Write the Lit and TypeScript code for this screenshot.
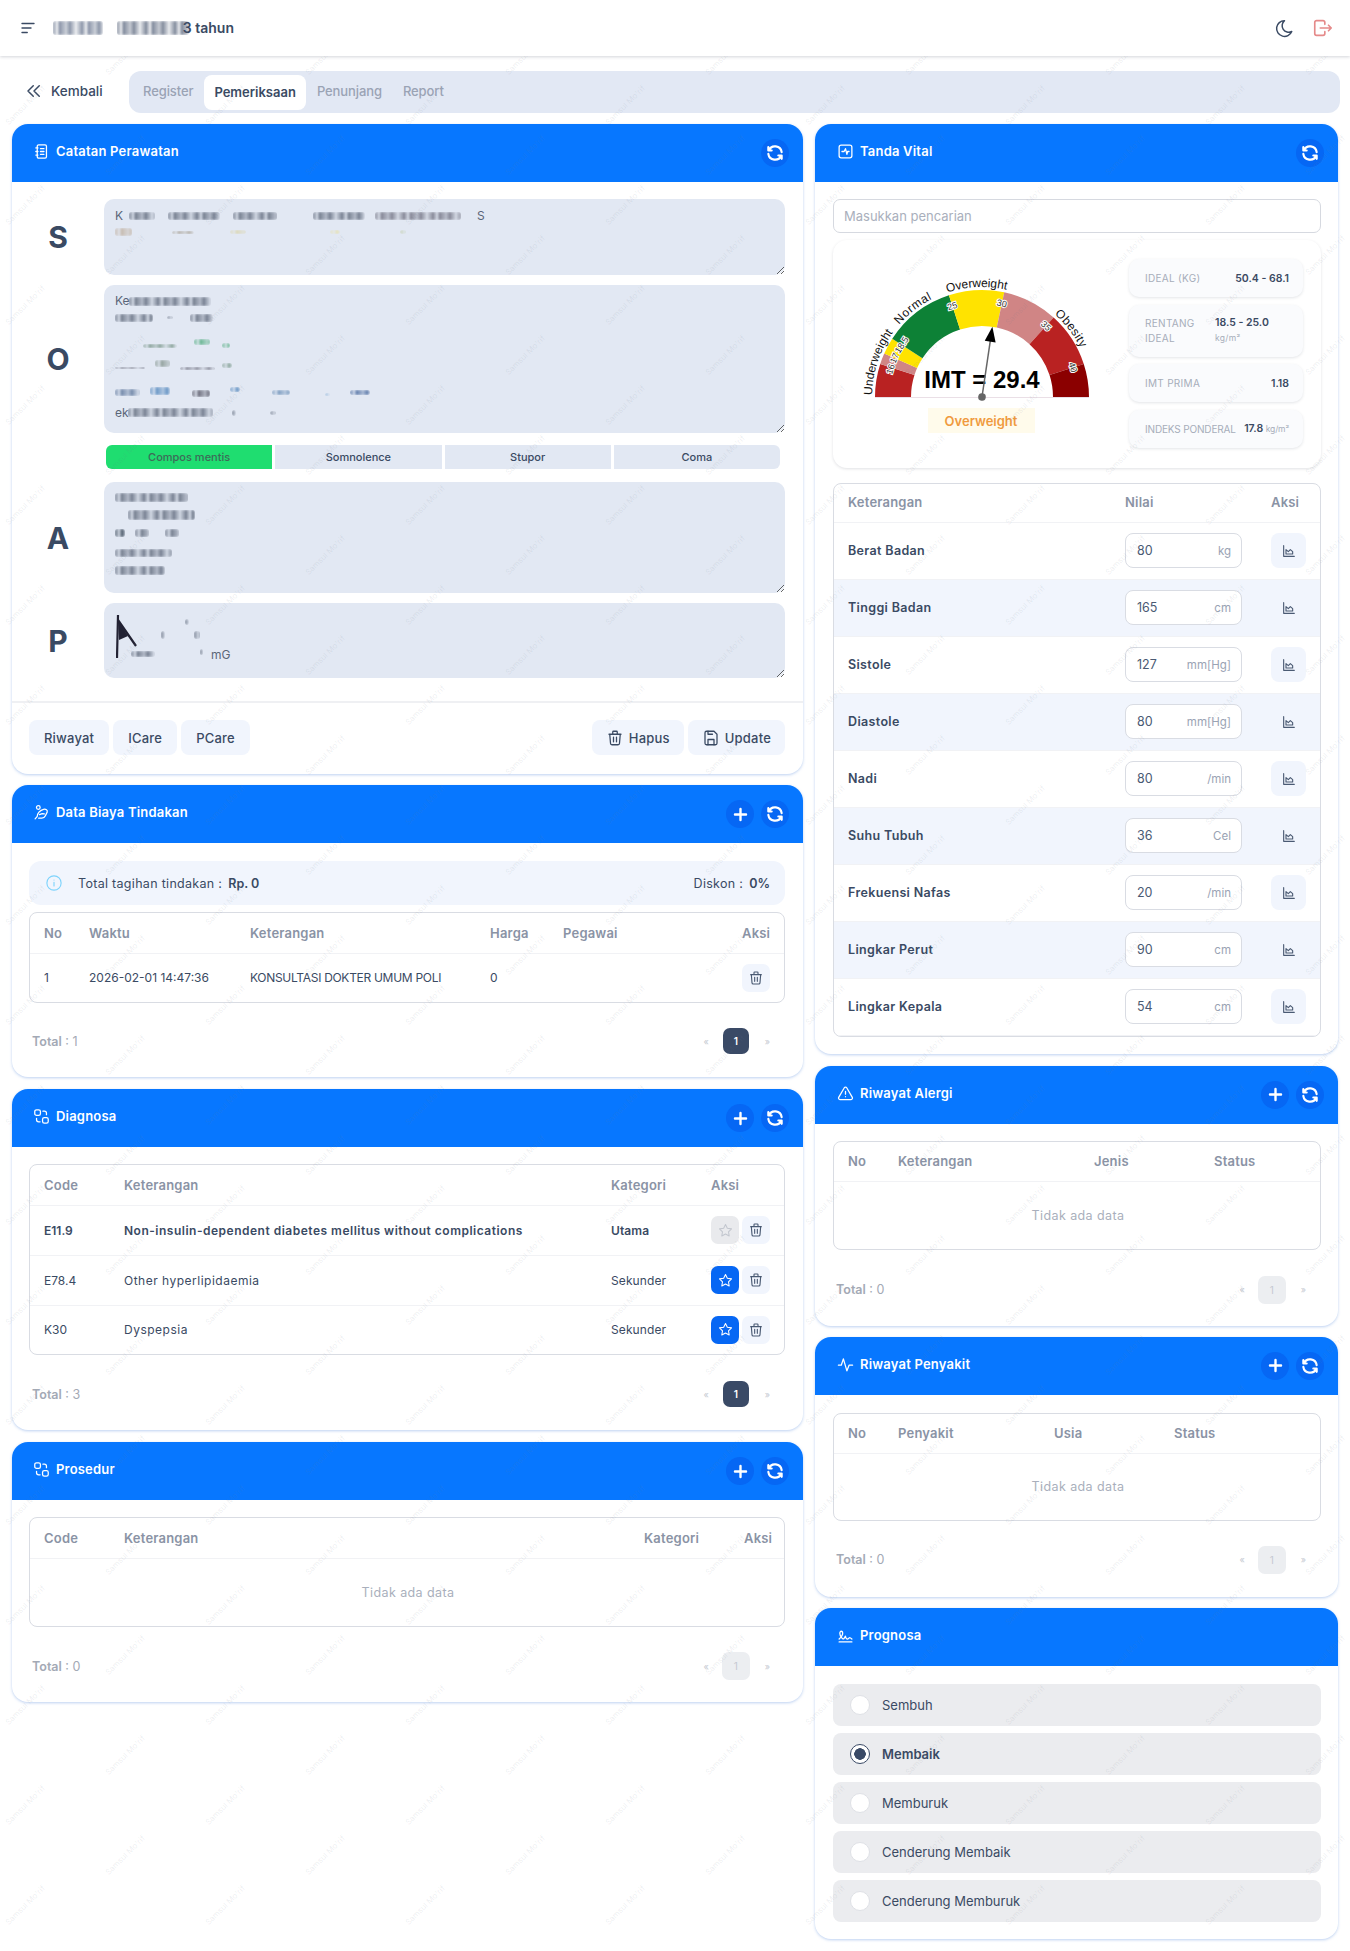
import { LitElement, html, css, svg } from "lit";
import { customElement } from "lit/decorators.js";

const ic = (body: unknown, size = 18, sw = 1.8) => html`<svg class="ic" width=${size} height=${size} viewBox="0 0 24 24" fill="none" stroke="currentColor" stroke-width=${sw} stroke-linecap="round" stroke-linejoin="round">${body}</svg>`;

const I = {
  menu: svg`<path d="M4 6h16M4 12h12M4 18h7"/>`,
  moon: svg`<path d="M12 3a7.5 7.5 0 0 0 8.3 12.4A9 9 0 1 1 12 3z"/>`,
  logout: svg`<path d="M14 8V6a2 2 0 0 0-2-2H5a2 2 0 0 0-2 2v12a2 2 0 0 0 2 2h7a2 2 0 0 0 2-2v-2"/><path d="M9 12h12l-3-3m0 6l3-3"/>`,
  back: svg`<path d="M11 5l-7 7 7 7M19 5l-7 7 7 7"/>`,
  refresh: svg`<path d="M20 11A8.1 8.1 0 0 0 4.5 9M4 5v4h4"/><path d="M4 13a8.1 8.1 0 0 0 15.5 2m.5 4v-4h-4"/>`,
  plus: svg`<path d="M12 5v14M5 12h14"/>`,
  notebook: svg`<rect x="6" y="2.5" width="13" height="19" rx="2"/><path d="M4 7h3M4 12h3M4 17h3M10.5 8h5M10.5 12h5M10.5 16h5"/>`,
  vital: svg`<rect x="3" y="3" width="18" height="18" rx="3"/><path d="M7 12h3l2-4 2 8 1-4h2"/>`,
  hand: svg`<circle cx="7.5" cy="5" r="2.6"/><path d="M3 21l3-3.5c-.5-4 4-9 9-10 3-.6 6 1 5 4l-2.500 5c-1 2-3 3.500-5 3.500H8"/><path d="M9 15l4-1.500 3 .5"/>`,
  transform: svg`<rect x="2.500" y="2.500" width="8" height="8" rx="2.500"/><rect x="13.500" y="13.500" width="8" height="8" rx="2.500"/><path d="M14 4.500h2a3 3 0 0 1 3 3v2M10 19.500H8a3 3 0 0 1-3-3v-2"/>`,
  alert: svg`<path d="M12 9v4M12 16.500v.01M10.300 3.900L2.400 17.500A2 2 0 0 0 4.100 20.500h15.800a2 2 0 0 0 1.700-3L13.700 3.900a2 2 0 0 0-3.400 0z"/>`,
  pulse: svg`<path d="M2 13h4l3-9 5 17 3-8h5"/>`,
  sign: svg`<path d="M3 17c3.300-3.300 5-6 5-8 0-3-1-3-2-3s-2 1.100-2 3c0 2 1.700 4.900 2.500 6 1.500 2 2.500 2.500 3.500 1l2-3c.3 2.700 1.300 4 3 4 .5 0 2.600-2 3-2 .5 0 1.500.7 3 2"/><path d="M3 21h18"/>`,
  trash: svg`<path d="M4 7h16M10 11v6M14 11v6M5 7l1 12a2 2 0 0 0 2 2h8a2 2 0 0 0 2-2l1-12M9 7V4a1 1 0 0 1 1-1h4a1 1 0 0 1 1 1v3"/>`,
  save: svg`<path d="M6 3h10l4 4v12a2 2 0 0 1-2 2H6a2 2 0 0 1-2-2V5a2 2 0 0 1 2-2z"/><path d="M8 21v-7h8v7M8 3v4h6"/>`,
  star: svg`<path d="M12 3.500l2.600 5.400 5.900.8-4.300 4.100 1 5.900L12 16.900l-5.200 2.800 1-5.900L3.500 9.700l5.900-.8z"/>`,
  chart: svg`<path d="M4 4v16h16"/><path d="M7.500 16.500V10l3.500 3 3-3 3.500 3v3.500z"/>`,
  info: svg`<circle cx="12" cy="12" r="9.500"/><path d="M12 11v5M12 8v.01"/>`,
};

/* The reference hides the notes behind a privacy blur. They are reproduced as smudges, not invented text. */
type Sm = [number, number, number, number, string?, number?];
const C = "#3f4a5e";
const smS: Sm[] = [[14,13,26,8],[53,13,52,8],[118,13,44,8],[198,13,52,8],[260,13,86,8,"#556"],[0,29,17,8,"#b9a58f"],[57,32,22,3,"#998f7c"],[115,31,16,4,"#d8cf9a"],[215,31,10,4,"#e8dfa0"],[285,31,6,4,"#b5c38e"]];
const smO: Sm[] = [[14,12,82,9],[0,29,38,8],[52,31,6,3],[75,29,23,8],[28,59,34,4,"#5b7f6b"],[79,54,16,6,"#2f9e63"],[107,58,8,5,"#2f9e63"],[0,82,30,2,"#556"],[40,75,15,7,"#6c7f74"],[65,82,35,3,"#556"],[107,78,10,5,"#678a78"],[0,104,25,7,"#3c5a86"],[35,102,20,8,"#2f6fb0"],[77,105,18,7,"#334"],[115,102,10,5,"#2f6fb0"],[157,105,18,5,"#4c78a8"],[210,108,5,3,"#6ea0d0"],[235,105,20,5,"#234a8a"],[13,123,85,9],[117,125,4,6],[155,126,6,4]];
const smA: Sm[] = [[0,11,73,9],[13,28,67,10],[0,47,10,8,"#123"],[20,47,14,8],[50,47,14,8],[0,67,57,8],[0,84,50,9]];
const smP: Sm[] = [[46,28,4,8],[70,16,4,6],[79,28,6,8],[85,46,3,6],[16,48,24,6]];
const smT: Sm[] = [[0,3,50,14,"#4e5d7a"],[64,3,72,14,"#3f4d68"]];

const bg = (s: Sm) => `left:${s[0]}px;top:${s[1]}px;width:${s[2]}px;height:${s[3]}px;background:${s[4] ?? C}`;

const GC = { x: 149, y: 157, R: 107, r: 71 };
const pt = (rad: number, deg: number) => {
  const a = (deg * Math.PI) / 180;
  return [GC.x - rad * Math.cos(a), GC.y - rad * Math.sin(a)].map((v) => +v.toFixed(2));
};
const seg = (a: number, b: number) => {
  const [x1, y1] = pt(GC.R, a), [x2, y2] = pt(GC.R, b), [x3, y3] = pt(GC.r, b), [x4, y4] = pt(GC.r, a);
  return `M${x1} ${y1}A${GC.R} ${GC.R} 0 0 1 ${x2} ${y2}L${x3} ${y3}A${GC.r} ${GC.r} 0 0 0 ${x4} ${y4}Z`;
};
const segs: [number, number, string][] = [[0,18,"#b92222"],[18,24,"#d08585"],[24,33,"#ffe300"],[33,72,"#0d8136"],[72,102,"#ffe300"],[102,132,"#d08585"],[132,162,"#b92222"],[162,180,"#8b0000"]];
const ticks: [string, number][] = [["16",17],["17",24],["18.5",33],["25",72],["30",102],["35",132],["40",162]];
const names: [string, number, number][] = [["Underweight",1,67],["Normal",41,42],["Overweight",71.500,60],["Obesity",131,43]];

const vitals = [["Berat Badan","80","kg"],["Tinggi Badan","165","cm"],["Sistole","127","mm[Hg]"],["Diastole","80","mm[Hg]"],["Nadi","80","/min"],["Suhu Tubuh","36","Cel"],["Frekuensi Nafas","20","/min"],["Lingkar Perut","90","cm"],["Lingkar Kepala","54","cm"]];

@customElement("app-root")
export class AppRoot extends LitElement {
  static styles = css`
    :host { display: block; position: relative; height: 1951px; overflow: hidden; background: #fff; color: #3a4a63; font-family: Inter, "Open Sans", sans-serif; font-size: 12.5px; }
    * { box-sizing: border-box; }
    .ic { display: block; flex: none; }
    .top { position: relative; z-index: 2; height: 56px; display: flex; align-items: center; padding: 0 16px 0 19px; box-shadow: 0 1px 3px rgba(60,70,90,.22); background: #fff; }
    .title { position: relative; margin-left: 16px; width: 181px; height: 20px; text-align: right; font-size: 14px; font-weight: 600; line-height: 20px; }
    .title .sms { left: 0; }
    .spacer { flex: 1; }
    .moon { margin-right: 17px; }
    .logout { color: #e58a8a; }
    .nav { display: flex; align-items: center; margin: 15px 10px 11px 0; height: 42px; }
    .back { width: 129px; padding-left: 25px; display: flex; align-items: center; gap: 8px; font-weight: 500; font-size: 13.500px; padding-bottom: 2px; }
    .tabs { flex: 1; height: 42px; background: #e2e8f4; border-radius: 12px; display: flex; align-items: center; padding: 0 0 0 14px; gap: 21px; color: #9aa3b4; font-size: 13px; }
    .tabs b { font-weight: 500; letter-spacing: -.1px; padding-bottom: 2px; }
    .tabs .on { background: #fff; color: #3a4a63; border-radius: 8px; height: 35px; line-height: 34px; padding: 0 10px; margin: 0 -10px; letter-spacing: 0; font-weight: 600; }
    .cols { display: grid; grid-template-columns: 791px 523px; gap: 12px; padding-left: 12px; align-items: start; }
    .col { display: flex; flex-direction: column; }
    .g11 { margin-top: 11px; }
    .g12 { margin-top: 12px; }
    .card { background: #fff; border-radius: 16px; box-shadow: 0 1px 3px rgba(90,140,220,.4); }
    .ch { height: 58px; background: #0777ff; border-radius: 16px 16px 0 0; color: #fff; display: flex; align-items: center; padding: 0 14px 0 21px; font-weight: 600; font-size: 13px; gap: 7px; }
    .ch .lbl { flex: 1; margin: -4px 0 0 -1px; letter-spacing: .2px; }
    .ch > .ic { margin-top: -3px; }
    .right .ch { padding-left: 22px; }
    .rb { width: 28px; height: 28px; border-radius: 50%; background: #0667f4; display: grid; place-items: center; }
    .body { padding: 17px 18px 17px 17px; }
    .right .body { padding: 17px 17px 17px 18px; }
    .soap { display: grid; grid-template-columns: 74px 681px; row-gap: 10px; padding: 17px 18px 23px 18px; }
    .letter { font-size: 30px; font-weight: 700; display: grid; place-items: center; color: #3a4a63; transform: translateX(-9px); }
    .ta { position: relative; display: flex; }
    textarea { flex: 1; display: block; border: 0; background: #e2e8f3; border-radius: 10px; resize: vertical; outline: none; margin: 0; padding: 0; }
    .sms { position: absolute; left: 11px; top: 0; pointer-events: none; font-size: 12px; color: #5a6577; }
    .sm { position: absolute; filter: blur(.9px); opacity: .62; border-radius: 2px; -webkit-mask-image: repeating-linear-gradient(90deg, #000 0, rgba(0,0,0,.25) 4px, #000 7px, rgba(0,0,0,.5) 13px, #000 17px, rgba(0,0,0,.2) 23px, #000 29px); mask-image: repeating-linear-gradient(90deg, #000 0, rgba(0,0,0,.25) 4px, #000 7px, rgba(0,0,0,.5) 13px, #000 17px, rgba(0,0,0,.2) 23px, #000 29px); }
    .frag { position: absolute; white-space: nowrap; line-height: 14px; }
    .tri { position: absolute; left: 12px; top: 11px; filter: blur(.5px); pointer-events: none; }
    .segm { grid-column: 2; display: grid; grid-template-columns: repeat(4, 1fr); gap: 3px; margin: 2px 5px 3px 2px; height: 24px; }
    .segm div { background: #e2e8f3; font-size: 11px; font-weight: 500; display: grid; place-items: center; }
    .segm div:first-child { background: #1fdd70; border-radius: 6px 0 0 6px; color: #3d6b58; }
    .segm div:last-child { border-radius: 0 6px 6px 0; }
    .foot { border-top: 2px solid #eff0f3; padding: 17px 18px 19px 17px; display: flex; gap: 4px; }
    .btn { height: 35px; background: #f1f5fd; border-radius: 8px; display: flex; align-items: center; padding: 0 15px; font-weight: 500; font-size: 13px; gap: 6px; color: #3a4a63; letter-spacing: .2px; }
    .btn.i { padding: 0 14px; gap: 5px; }
    .info { height: 44px; border-radius: 12px; background: #f1f5fd; display: flex; align-items: center; padding: 0 15px 0 16px; margin: 1px 0 7px; font-size: 12.5px; letter-spacing: .3px; }
    .info .ic { color: #7dd3fc; margin-right: 15px; }
    .info b { font-weight: 600; margin-left: 6px; letter-spacing: 0; }
    .wrap { border: 1px solid #d9dce3; border-radius: 8px; overflow: hidden; }
    table { width: 100%; border-collapse: collapse; table-layout: fixed; }
    th { height: 40px; text-align: left; padding: 0 14px; color: #8a93a5; font-weight: 600; font-size: 13px; letter-spacing: .2px; border-bottom: 1px solid #f1f2f5; white-space: nowrap; }
    td { padding: 0 14px; font-size: 12px; white-space: nowrap; }
    td.w { letter-spacing: .5px; }
    td.k { letter-spacing: .1px; }
    td.u { letter-spacing: -.3px; }
    .bordered td { border-bottom: 1px solid #f1f2f5; }
    .bordered tr:last-child td { border-bottom: 0; }
    .strong td { font-weight: 600; }
    .empty { text-align: center; color: #a9afbc; font-size: 12.500px; letter-spacing: .4px; }
    .act { display: flex; gap: 3px; }
    .sq { width: 28px; height: 28px; background: #f1f5fd; border-radius: 7px; display: grid; place-items: center; color: #4a5a73; }
    .sq.blue { background: #0667f4; color: #fff; }
    .sq.off { background: #e9eaed; color: #c3c7cf; }
    .pager { display: flex; align-items: center; justify-content: space-between; padding: 0 15px 0 3px; margin-top: 8px; height: 28px; font-size: 12.500px; color: #a3a9b5; }
    .pager b { font-weight: 600; }
    .pg { display: flex; align-items: center; gap: 13px; font-size: 9px; color: #c5c9d1; }
    .pg span.n { width: 28px; height: 28px; display: grid; place-items: center; font-size: 10px; background: #eceef1; border-radius: 7px; color: #c5c9d1; margin-right: 2px; }
    .pg span.n.on { background: #3a4a66; color: #fff; width: 26px; height: 26px; font-weight: 600; margin: 0 3px 0 1px; }
    .body.tail { padding-bottom: 22px; }
    .body.tail23 { padding-bottom: 23px; padding-top: 18px; }
    .search { height: 34px; border: 1px solid #d6d9e0; border-radius: 7px; display: flex; align-items: center; padding-left: 10px; color: #a9afbc; font-size: 13px; }
    .imt { margin-top: 7px; height: 228px; border-radius: 14px; box-shadow: 0 1px 3px rgba(60,70,90,.16); display: flex; }
    .g { width: 296px; display: flex; flex-direction: column; align-items: center; }
    .g svg { display: block; }
    .badge { width: 107px; height: 25px; background: #fffbeb; color: #f09a3e; font-weight: 600; font-size: 13px; display: grid; place-items: center; }
    .stats { width: 174px; padding-top: 19px; display: flex; flex-direction: column; gap: 7.500px; }
    .st { height: 38px; background: #fafbfd; border-radius: 10px; box-shadow: 0 1px 3px rgba(60,70,90,.14); display: flex; align-items: center; justify-content: space-between; padding: 0 14px 0 16px; font-size: 10px; color: #a6adba; white-space: nowrap; letter-spacing: .3px; }
    .st.n { letter-spacing: -.15px; }
    .st b { color: #3a4a63; font-weight: 600; font-size: 10.500px; letter-spacing: 0; }
    .st small { font-size: 8.500px; color: #a6adba; }
    .st.tall { height: 52px; justify-content: flex-start; gap: 0; line-height: 15px; }
    .st.tall > div:first-child { width: 70px; }
    .vt { margin-top: 15px; }
    .vt th { height: 38px; padding-bottom: 2px; }
    .vt td { height: 57px; font-size: 12.500px; }
    .vt td.nm { font-weight: 600; letter-spacing: .35px; }
    .vt tr:nth-child(even) td { background: #f1f5fd; }
    .vt tbody td { border-bottom: 1px solid #f1f2f5; }
    .inp { width: 117px; height: 35px; background: #fff; border: 1px solid #d9dce3; border-radius: 8px; display: flex; justify-content: space-between; align-items: center; padding: 0 10px 0 11px; color: #4a5a73; }
    .inp span:last-child { color: #9aa3b4; font-size: 11.500px; }
    .ck { width: 35px; height: 35px; border-radius: 8px; background: #f1f5fd; display: grid; place-items: center; color: #4a5a73; }
    .opts { display: flex; flex-direction: column; gap: 7px; padding-top: 18px; }
    .opt { height: 42px; background: #ebecef; border-radius: 8px; display: flex; align-items: center; padding-left: 17px; gap: 12px; font-size: 13px; }
    .opt i { width: 20px; height: 20px; border-radius: 50%; background: #fff; border: 1px solid #dfe1e6; display: block; flex: none; }
    .opt.on { font-weight: 600; }
    .opt.on i { border: 1.500px solid #3a4a66; background: radial-gradient(circle, #3a4a66 0 5.500px, #fff 6px); }
    .wm { position: absolute; z-index: 1; inset: 0; pointer-events: none; overflow: hidden; }
    .wm span { position: absolute; transform: translate(-50%, -50%) rotate(-45deg); font-size: 8px; color: rgba(110,120,140,.13); white-space: nowrap; }
  `;

  private head(icon: unknown, title: string, plus = false, refresh = true) {
    return html`<div class="ch">${ic(icon, 17, 1.800)}<span class="lbl">${title}</span>
      ${plus ? html`<div class="rb">${ic(I.plus, 19, 3)}</div>` : ""}
      ${refresh ? html`<div class="rb">${ic(I.refresh, 20, 2.600)}</div>` : ""}</div>`;
  }

  private smudge(list: Sm[], frags: [string, number, number][] = []) {
    return html`<div class="sms">${list.map((s) => html`<div class="sm" style=${bg(s)}></div>`)}${frags.map(
      (f) => html`<span class="frag" style="left:${f[1]}px;top:${f[2]}px">${f[0]}</span>`
    )}</div>`;
  }

  private ta(letter: string, h: number, list: Sm[], frags: [string, number, number][] = [], extra: unknown = "") {
    return html`<div class="letter">${letter}</div>
      <div class="ta" style="height:${h}px"><textarea readonly aria-label=${letter}></textarea>${this.smudge(list, frags)}${extra}</div>`;
  }

  private table(cols: number[], heads: string[], rows: unknown) {
    return html`<div class="wrap"><table class="bordered"><colgroup>${cols.map((c) => html`<col style="width:${c}px" />`)}</colgroup>
      <thead><tr>${heads.map((h) => html`<th>${h}</th>`)}</tr></thead><tbody>${rows}</tbody></table></div>`;
  }

  private pager(total: number, active: boolean) {
    return html`<div class="pager"><span><b>Total</b> : ${total}</span>
      <div class="pg"><span>«</span><span class="n ${active ? "on" : ""}">1</span><span>»</span></div></div>`;
  }

  private emptyRow(n: number, h: number) {
    return html`<tr><td class="empty" colspan=${n} style="height:${h}px">Tidak ada data</td></tr>`;
  }

  private del() { return html`<div class="sq">${ic(I.trash, 16, 1.700)}</div>`; }

  private gauge() {
    const R = 110;
    const arc = `M${GC.x - R} ${GC.y}A${R} ${R} 0 0 1 ${GC.x + R} ${GC.y}`;
    return html`<svg width="296" height="168" viewBox="0 0 296 168">
      <defs><path id="lb" d=${arc}></path></defs>
      ${segs.map((s) => svg`<path d=${seg(s[0], s[1])} fill=${s[2]}></path>`)}
      <path d="M${GC.x - GC.R} ${GC.y + 0.5}H${GC.x + GC.R}" stroke="#eadfe6" stroke-width="1"></path>
      ${names.map((n) => svg`<text font-family="Liberation Sans, sans-serif" font-size="12" fill="#111" textLength=${n[2]}><textPath href="#lb" startOffset=${(n[1] * Math.PI * R) / 180}>${n[0]}</textPath></text>`)}
      ${ticks.map((t) => {
        const [x, y] = pt(95, t[1]);
        return svg`<text x=${x} y=${y} transform="rotate(${t[1] - 90} ${x} ${y})" text-anchor="middle" dominant-baseline="middle" font-family="Liberation Sans, sans-serif" font-size="9" fill="#333" stroke="#fff" stroke-width="2" paint-order="stroke">${t[0]}</text>`;
      })}
      <text x=${GC.x} y="148" text-anchor="middle" font-family="Liberation Sans, sans-serif" font-weight="700" font-size="24" fill="#000">IMT = 29.4</text>
      <g transform="translate(${GC.x} ${GC.y}) rotate(8.400)">
        <path d="M0 0V-58" stroke="#666" stroke-width="1.500"></path>
        <path d="M0 -71L5.500 -56H-5.500Z" fill="#000"></path>
        <circle r="3.800" fill="#666"></circle>
      </g>
    </svg>`;
  }

  render() {
    const wm: { x: number; y: number }[] = [];
    for (let j = 0; j < 20; j++) for (let k = 0; k < 7; k++) {
      const ay = 105 + 100 * j, by = 55 + 100 * j;
      if (ay < 1930) wm.push({ x: 25 + 200 * k, y: ay });
      if (by < 1930) wm.push({ x: 125 + 200 * k, y: by });
    }
    return html`
      <div class="top">${ic(I.menu, 18, 1.800)}
        <div class="title">${this.smudge(smT)}3 tahun</div>
        <div class="spacer"></div>
        <div class="moon">${ic(I.moon, 21, 1.700)}</div><div class="logout">${ic(I.logout, 22, 1.800)}</div>
      </div>
      <div class="nav">
        <div class="back">${ic(I.back, 18, 2)}<span>Kembali</span></div>
        <div class="tabs"><b>Register</b><b class="on">Pemeriksaan</b><b>Penunjang</b><b>Report</b></div>
      </div>
      <div class="cols">
        <div class="col">
          <section class="card">
            ${this.head(I.notebook, "Catatan Perawatan")}
            <div class="soap">
              ${this.ta("S", 76, smS, [["K", 0, 10], ["S", 362, 10]])}
              ${this.ta("O", 148, smO, [["Ke", 0, 9], ["ek", 0, 121]])}
              <div class="segm"><div>Compos mentis</div><div>Somnolence</div><div>Stupor</div><div>Coma</div></div>
              ${this.ta("A", 111, smA)}
              ${this.ta("P", 75, smP, [["mG", 96, 45]], html`<svg class="tri" width="24" height="46" viewBox="0 0 24 46" fill="none" stroke="#223" stroke-width="2.200"><path d="M2 1L1 44M2 6L20 32"></path><path d="M2 6L3 26L12 22Z" fill="#223" stroke="none"></path></svg>`)}
            </div>
            <div class="foot">
              <div class="btn">Riwayat</div><div class="btn">ICare</div><div class="btn">PCare</div>
              <div class="spacer"></div>
              <div class="btn i">${ic(I.trash, 18, 1.700)}Hapus</div><div class="btn i">${ic(I.save, 18, 1.700)}Update</div>
            </div>
          </section>
          <section class="card g11">
            ${this.head(I.hand, "Data Biaya Tindakan", true)}
            <div class="body tail">
              <div class="info">${ic(I.info, 18, 1.500)}<span>Total tagihan tindakan :</span><b>Rp. 0</b><span class="spacer"></span><span>Diskon :</span><b>0%</b></div>
              ${this.table([45,161,240,73,179,58],["No","Waktu","Keterangan","Harga","Pegawai","Aksi"],html`
                <tr style="height:49px"><td>1</td><td>2026-02-01 14:47:36</td><td class="u">KONSULTASI DOKTER UMUM POLI</td><td>0</td><td></td><td>${this.del()}</td></tr>`)}
              <div style="height:16px"></div>${this.pager(1, true)}
            </div>
          </section>
          <section class="card g12">
            ${this.head(I.transform, "Diagnosa", true)}
            <div class="body tail">
              ${this.table([80,487,100,89],["Code","Keterangan","Kategori","Aksi"],html`
                <tr class="strong" style="height:50px"><td>E11.9</td><td class="w">Non-insulin-dependent diabetes mellitus without complications</td><td class="k">Utama</td><td><div class="act"><div class="sq off">${ic(I.star, 17, 1.500)}</div>${this.del()}</div></td></tr>
                <tr style="height:50px"><td>E78.4</td><td class="w">Other hyperlipidaemia</td><td class="k">Sekunder</td><td><div class="act"><div class="sq blue">${ic(I.star, 17, 1.500)}</div>${this.del()}</div></td></tr>
                <tr style="height:49px"><td>K30</td><td class="w">Dyspepsia</td><td class="k">Sekunder</td><td><div class="act"><div class="sq blue">${ic(I.star, 17, 1.500)}</div>${this.del()}</div></td></tr>`)}
              <div style="height:17px"></div>${this.pager(3, true)}
            </div>
          </section>
          <section class="card g12">
            ${this.head(I.transform, "Prosedur", true)}
            <div class="body tail">
              ${this.table([80,520,100,56],["Code","Keterangan","Kategori","Aksi"],this.emptyRow(4, 68))}
              <div style="height:17px"></div>${this.pager(0, false)}
            </div>
          </section>
        </div>
        <div class="col right">
          <section class="card">
            ${this.head(I.vital, "Tanda Vital")}
            <div class="body">
              <div class="search">Masukkan pencarian</div>
              <div class="imt">
                <div class="g">${this.gauge()}<div class="badge">Overweight</div></div>
                <div class="stats">
                  <div class="st"><span>IDEAL (KG)</span><b>50.4 - 68.1</b></div>
                  <div class="st tall"><div>RENTANG<br />IDEAL</div><div><b>18.5 - 25.0</b><br /><small>kg/m²</small></div></div>
                  <div class="st"><span>IMT PRIMA</span><b>1.18</b></div>
                  <div class="st n"><span>INDEKS PONDERAL</span><span><b>17.8</b> <small>kg/m²</small></span></div>
                </div>
              </div>
              <div class="wrap vt"><table><colgroup><col style="width:277px" /><col style="width:146px" /><col /></colgroup>
                <thead><tr><th>Keterangan</th><th>Nilai</th><th>Aksi</th></tr></thead>
                <tbody>${vitals.map((v) => html`<tr><td class="nm">${v[0]}</td><td><div class="inp"><span>${v[1]}</span><span>${v[2]}</span></div></td><td><div class="ck">${ic(I.chart, 16, 1.700)}</div></td></tr>`)}</tbody>
              </table></div>
            </div>
          </section>
          <section class="card g12">
            ${this.head(I.alert, "Riwayat Alergi", true)}
            <div class="body tail">
              ${this.table([50,196,120,122],["No","Keterangan","Jenis","Status"],this.emptyRow(4, 67))}
              <div style="height:18px"></div>${this.pager(0, false)}
            </div>
          </section>
          <section class="card g11">
            ${this.head(I.pulse, "Riwayat Penyakit", true)}
            <div class="body tail23">
              ${this.table([50,156,120,162],["No","Penyakit","Usia","Status"],this.emptyRow(4, 66))}
              <div style="height:17px"></div>${this.pager(0, false)}
            </div>
          </section>
          <section class="card g11">
            ${this.head(I.sign, "Prognosa", false, false)}
            <div class="body" style="padding-top:0">
              <div class="opts">
                ${["Sembuh","Membaik","Memburuk","Cenderung Membaik","Cenderung Memburuk"].map((o, i) => html`<div class="opt ${i === 1 ? "on" : ""}"><i></i>${o}</div>`)}
              </div>
            </div>
          </section>
        </div>
      </div>
      <div class="wm" aria-hidden="true">${wm.map((p) => html`<span style="left:${p.x}px;top:${p.y}px">Samsul Mo'rif</span>`)}</div>
    `;
  }
}
